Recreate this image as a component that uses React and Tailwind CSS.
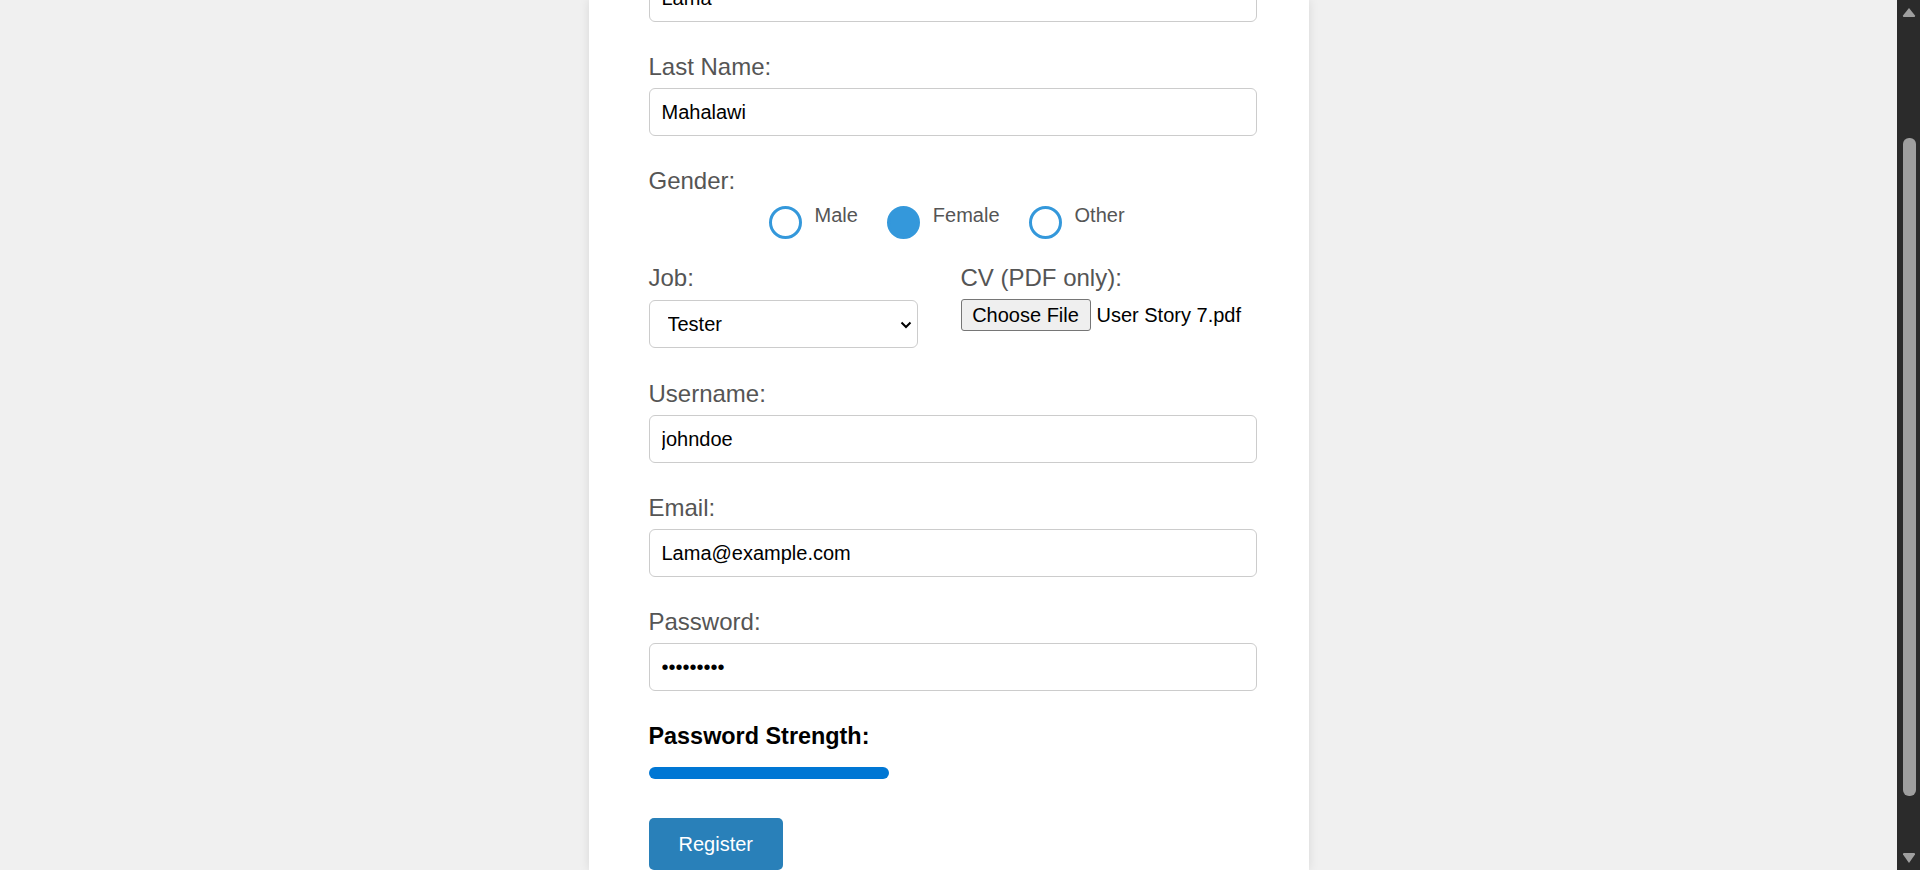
import React from 'react';

const font = { fontFamily: '"Liberation Sans", Arial, sans-serif' };

const Label = ({ children, className = '' }) => (
  <label className={`block text-[24px] leading-[28px] text-[#555] ${className}`}>{children}</label>
);

const TextInput = ({ type = 'text', value }) => (
  <input
    type={type}
    defaultValue={value}
    readOnly
    className="block w-[608px] h-[48px] px-[12px] text-[20px] text-black bg-white border border-[#ccc] rounded-[6px] outline-none"
  />
);

const Field = ({ label, type, value, className = 'mb-[31px]' }) => (
  <div className={className}>
    <Label className="mb-[7px]">{label}</Label>
    <TextInput type={type} value={value} />
  </div>
);

const Radio = ({ label, checked, first }) => (
  <label className={`flex items-start ${first ? '' : 'ml-[29px]'}`}>
    <span
      className={`mt-[4px] w-[33px] h-[33px] rounded-full border-[3px] border-[#3498db] ${checked ? 'bg-[#3498db]' : 'bg-white'}`}
    />
    <span className="ml-[13px] mt-[2px] text-[20px] leading-[23px] text-[#555]">{label}</span>
  </label>
);

const Scrollbar = () => (
  <div className="w-[23px] shrink-0 h-full bg-[#2b2b2b] flex flex-col items-center">
    <svg width="14" height="10" viewBox="0 0 14 10" className="mt-[7px] ml-[1px]">
      <path d="M7 1 L13 8.5 Q13.5 10 12 10 L2 10 Q0.5 10 1 8.5 Z" fill="#9f9f9f" />
    </svg>
    <div className="mt-[121px] ml-[1px] w-[13px] h-[658px] rounded-[6px] bg-[#9f9f9f]" />
    <div className="flex-1" />
    <svg width="14" height="11" viewBox="0 0 14 11" className="mb-[6px] ml-[1px]">
      <path d="M7 10 L13 1.5 Q13.5 0 12 0 L2 0 Q0.5 0 1 1.5 Z" fill="#9f9f9f" />
    </svg>
  </div>
);

export default function App() {
  return (
    <div className="w-full h-[870px] flex overflow-hidden bg-[#f0f0f0]" style={font}>
      <main className="flex-1 flex justify-center">
        <div className="w-[720px] h-full bg-white shadow-[0_0_10px_rgba(0,0,0,0.1)] px-[60px] overflow-hidden">
          <div className="-mt-[26px]">
            <div className="mb-[31px]">
              <TextInput value="Lama" />
            </div>

            <Field label="Last Name:" value="Mahalawi" />

            <div className="mb-[25px]">
              <Label className="mb-[7px]">Gender:</Label>
              <div className="flex pl-[120px] h-[37px]">
                <Radio label="Male" first />
                <Radio label="Female" checked />
                <Radio label="Other" />
              </div>
            </div>

            <div className="flex mb-[32px]">
              <div className="w-[269px]">
                <Label className="mb-[8px]">Job:</Label>
                <div className="relative">
                  <select
                    defaultValue="Tester"
                    className="appearance-none block w-[269px] h-[48px] pl-[18px] text-[20px] text-black bg-white border border-[#ccc] rounded-[6px] outline-none"
                  >
                    <option>Developer</option>
                    <option>Tester</option>
                    <option>Designer</option>
                  </select>
                  <svg
                    width="12"
                    height="8"
                    viewBox="0 0 12 8"
                    className="absolute right-[6px] top-[21px] pointer-events-none"
                  >
                    <path d="M1.5 1.5 L6 6 L10.5 1.5" fill="none" stroke="#000" strokeWidth="2" />
                  </svg>
                </div>
              </div>
              <div className="ml-[43px]">
                <Label className="mb-[7px]">CV (PDF only):</Label>
                <div className="flex items-center">
                  <button className="h-[32px] w-[130px] text-[20px] text-black bg-[#efefef] border border-[#767676] rounded-[3px]">
                    Choose File
                  </button>
                  <span className="ml-[6px] text-[20px] text-black">User Story 7.pdf</span>
                </div>
              </div>
            </div>

            <Field label="Username:" value="johndoe" />
            <Field label="Email:" value="Lama@example.com" />
            <Field label="Password:" type="password" value="123456789" className="mb-[32px]" />

            <h3 className="text-[23.4px] leading-[27px] font-bold text-black mb-[17px]">Password Strength:</h3>
            <div className="w-[240px] h-[12px] rounded-[6px] bg-[#0077d4] mb-[39px]" />

            <button className="h-[52px] px-[30px] text-[20px] text-white bg-[#2980b9] rounded-[5px]">
              Register
            </button>
          </div>
        </div>
      </main>
      <Scrollbar />
    </div>
  );
}
